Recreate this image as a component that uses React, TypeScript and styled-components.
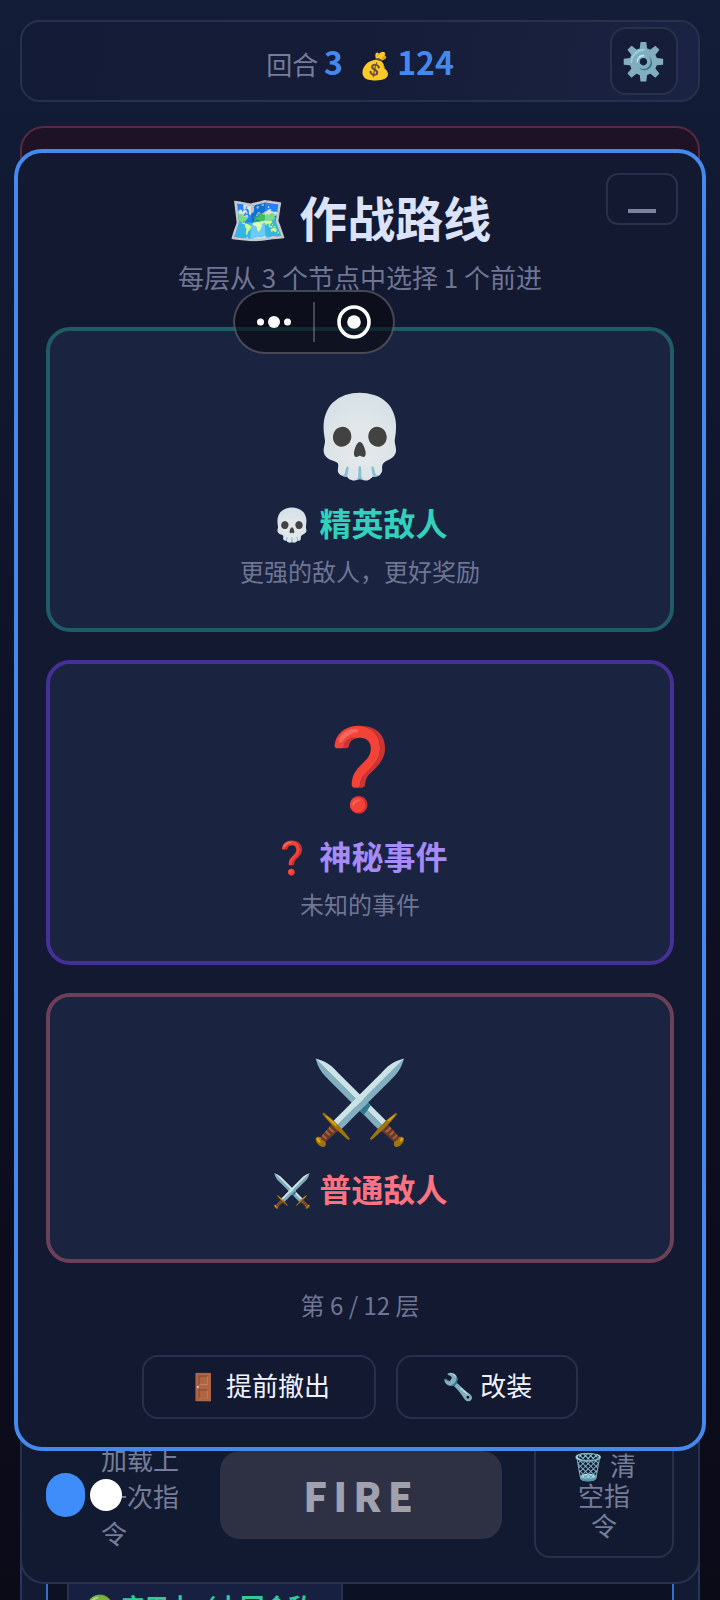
import React from 'react';
import styled, { createGlobalStyle } from 'styled-components';

const GlobalStyle = createGlobalStyle`
  * { box-sizing: border-box; }
  body {
    margin: 0;
    background: #0b0b18;
    color: #f1f4ff;
    font-family: "Noto Sans CJK SC", "Noto Color Emoji", sans-serif;
    font-size: 26px;
  }
  button { font: inherit; color: inherit; cursor: pointer; }
  h1, h2, p { margin: 0; }
`;

const Page = styled.div`
  height: 100vh;
  overflow: hidden;
  display: flex;
  flex-direction: column;
  padding: 20px 20px 0;
  background: linear-gradient(180deg, #131d38 0%, #111a33 12%, #0f1328 40%, #0c0c1b 80%, #0b0b18 100%);
`;

const TopBar = styled.header`
  display: grid;
  grid-template-columns: 68px 1fr 68px;
  align-items: center;
  flex: none;
  height: 82px;
  padding: 0 20px;
  border: 2px solid #28304e;
  border-radius: 20px;
  background: linear-gradient(100deg, #141b36 0%, #151c38 50%, #1a2342 100%);
`;

const Stats = styled.div`
  grid-column: 2;
  display: flex;
  justify-content: center;
  align-items: baseline;
  gap: 16px;
  color: #767d98;
  white-space: nowrap;
`;

const StatValue = styled.strong`
  font-size: 32px;
  line-height: 40px;
  color: #4589f0;
`;

const GearButton = styled.button`
  height: 68px;
  padding: 0 0 6px;
  border: 2px solid #28304e;
  border-radius: 16px;
  background: #151d39;
  font-size: 36px;
  line-height: 40px;
`;

const EnemyPanel = styled.section`
  flex: 1;
  margin: 24px 0;
  border: 2px solid #552a42;
  border-radius: 24px;
  background: #1e1226;
`;

const Controls = styled.section`
  position: relative;
  z-index: 1;
  flex: none;
  display: grid;
  grid-template-columns: 142px 1fr 140px;
  gap: 32px;
  align-items: center;
  padding: 24px;
  border: 2px solid #28314e;
  border-radius: 24px;
  background: #121a31;
`;

const ReplayLabel = styled.label`
  display: flex;
  align-items: center;
  gap: 16px;
  color: #767d98;
  line-height: 37px;
`;

const ReplaySwitch = styled.input`
  appearance: none;
  position: relative;
  z-index: 1;
  flex: none;
  width: 39px;
  height: 44px;
  margin: 0;
  border-radius: 22px;
  background: #3f8cfb;

  &::before {
    content: "";
    position: absolute;
    top: 6px;
    left: 44px;
    width: 32px;
    height: 32px;
    border-radius: 50%;
    background: #fff;
  }
`;

const FireButton = styled.button`
  height: 88px;
  border: 0;
  border-radius: 20px;
  background: #2e3043;
  color: #9fa1ae;
  font-size: 40px;
  font-weight: 900;
  letter-spacing: 6px;
`;

const ClearButton = styled.button`
  padding: 16px 32px;
  border: 2px solid #28304e;
  border-radius: 16px;
  background: transparent;
  color: #767d98;
  line-height: 30px;
`;

const QueuePanel = styled.section`
  flex: none;
  height: 44px;
  margin-top: -28px;
  padding: 24px 24px 0;
  overflow: hidden;
  border: 2px solid #28365e;
  border-width: 0 2px;
  background: #121a34;
`;

const QueueTrack = styled.div`
  padding: 0 19px;
  border: 2px solid #3271cc;
  border-width: 0 2px;
  background: #0c1124;
`;

const QueueChip = styled.div`
  width: 276px;
  padding: 6px 16px 0;
  border: 2px solid #28304e;
  background: #172040;
  color: #34c99a;
  font-size: 24px;
  font-weight: 700;
  line-height: 36px;
  white-space: nowrap;
`;

const Overlay = styled.div`
  position: fixed;
  inset: 0;
  z-index: 10;
  display: flex;
  flex-direction: column;
  justify-content: center;
  padding: 0 14px;
`;

const Dialog = styled.section`
  position: relative;
  padding: 28px;
  border: 4px solid #4489ee;
  border-radius: 28px;
  background: #121931;
  text-align: center;
`;

const Title = styled.h1`
  margin-bottom: 6px;
  font-size: 48px;
  line-height: 70px;
  color: #dbe3fb;
`;

const Subtitle = styled.p`
  margin-bottom: 30px;
  line-height: 40px;
  color: #6f7694;
`;

const MinimizeButton = styled.button`
  position: absolute;
  top: 20px;
  right: 24px;
  display: flex;
  align-items: flex-end;
  justify-content: center;
  width: 72px;
  height: 52px;
  padding: 0 0 10px;
  border: 2px solid #28304e;
  border-radius: 12px;
  background: transparent;
`;

const MinimizeBar = styled.span`
  width: 28px;
  height: 4px;
  background: #7d839d;
`;

const NodeList = styled.div`
  display: flex;
  flex-direction: column;
  gap: 28px;
`;

const NodeCard = styled.button<{ $edge: string }>`
  display: flex;
  flex-direction: column;
  align-items: center;
  padding: 40px 32px;
  border: 4px solid ${(p) => p.$edge};
  border-radius: 24px;
  background: #1a2340;
`;

const NodeIcon = styled.span`
  margin-bottom: 12px;
  font-size: 80px;
  line-height: 116px;
`;

const NodeName = styled.span<{ $color: string }>`
  margin-bottom: 8px;
  font-size: 32px;
  font-weight: 700;
  line-height: 46px;
  color: ${(p) => p.$color};
`;

const NodeText = styled.span`
  font-size: 24px;
  line-height: 35px;
  color: #6f7694;
`;

const Floor = styled.p`
  margin: 24px 0 32px;
  font-size: 24px;
  line-height: 36px;
  color: #6f7694;
`;

const Actions = styled.div`
  display: flex;
  justify-content: center;
  gap: 20px;
`;

const ActionButton = styled.button`
  height: 64px;
  padding: 0 44px 6px;
  border: 2px solid #28304e;
  border-radius: 16px;
  background: transparent;
  white-space: nowrap;
`;

const Capsule = styled.div`
  position: fixed;
  top: 290px;
  left: 233px;
  z-index: 20;
  display: flex;
  align-items: center;
  width: 162px;
  height: 64px;
  border: 2px solid rgba(255, 255, 255, 0.24);
  border-radius: 32px;
  background: rgba(8, 8, 14, 0.6);
`;

const CapsuleButton = styled.button`
  flex: 1;
  display: flex;
  align-items: center;
  justify-content: center;
  height: 100%;
  padding: 0;
  border: 0;
  background: transparent;
`;

const CapsuleDivider = styled.span`
  width: 2px;
  height: 40px;
  background: rgba(255, 255, 255, 0.24);
`;

const nodes = [
  { icon: '💀', name: '精英敌人', text: '更强的敌人，更好奖励', edge: '#205c66', color: '#31d2bd' },
  { icon: '❓', name: '神秘事件', text: '未知的事件', edge: '#443097', color: '#a48bf8' },
  { icon: '⚔️', name: '普通敌人', text: '', edge: '#6c4158', color: '#fb7280' },
];

export default function App() {
  return (
    <>
      <GlobalStyle />
      <Page>
        <TopBar>
          <Stats>
            <span>回合 <StatValue>3</StatValue></span>
            <span>💰 <StatValue>124</StatValue></span>
          </Stats>
          <GearButton aria-label="设置">⚙️</GearButton>
        </TopBar>
        <EnemyPanel />
        <Controls>
          <ReplayLabel>
            <ReplaySwitch type="checkbox" defaultChecked />
            <span>加载上一次指令</span>
          </ReplayLabel>
          <FireButton>FIRE</FireButton>
          <ClearButton>🗑️ 清空指令</ClearButton>
        </Controls>
        <QueuePanel>
          <QueueTrack>
            <QueueChip>🟢 应用中（本回合敌</QueueChip>
          </QueueTrack>
        </QueuePanel>
      </Page>
      <Overlay>
        <Dialog role="dialog" aria-labelledby="route-title">
          <MinimizeButton aria-label="最小化"><MinimizeBar /></MinimizeButton>
          <Title id="route-title">🗺️ 作战路线</Title>
          <Subtitle>每层从 3 个节点中选择 1 个前进</Subtitle>
          <NodeList>
            {nodes.map((n) => (
              <NodeCard key={n.name} $edge={n.edge}>
                <NodeIcon>{n.icon}</NodeIcon>
                <NodeName $color={n.color}>{n.icon} {n.name}</NodeName>
                {n.text && <NodeText>{n.text}</NodeText>}
              </NodeCard>
            ))}
          </NodeList>
          <Floor>第 6 / 12 层</Floor>
          <Actions>
            <ActionButton>🚪 提前撤出</ActionButton>
            <ActionButton>🔧 改装</ActionButton>
          </Actions>
        </Dialog>
      </Overlay>
      <Capsule>
        <CapsuleButton aria-label="更多">
          <svg width="34" height="12" viewBox="0 0 34 12" fill="#fff">
            <circle cx="3.5" cy="6" r="3.5" />
            <circle cx="17" cy="6" r="6" />
            <circle cx="30.5" cy="6" r="3.5" />
          </svg>
        </CapsuleButton>
        <CapsuleDivider />
        <CapsuleButton aria-label="关闭">
          <svg width="34" height="34" viewBox="0 0 34 34">
            <circle cx="17" cy="17" r="15" fill="none" stroke="#fff" strokeWidth="3.6" />
            <circle cx="17" cy="17" r="6.8" fill="#fff" />
          </svg>
        </CapsuleButton>
      </Capsule>
    </>
  );
}
